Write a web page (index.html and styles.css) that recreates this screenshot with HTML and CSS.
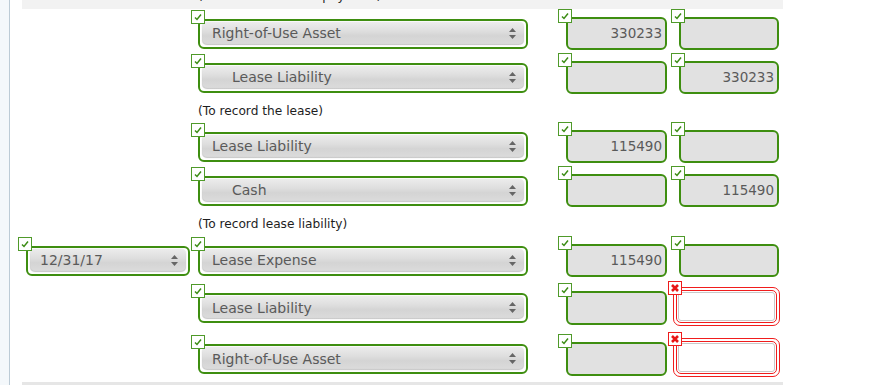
FILE: index.html
```html
<!DOCTYPE html>
<html lang="en">
<head>
  <meta charset="UTF-8">
  <title>Journal entries</title>
  <link rel="stylesheet" href="styles.css">
</head>
<body>

  <div class="page">
    <div class="rail"></div>

    <div class="sheet">
      <div class="band-top">
        <p class="note note--cut">(To record the lease payment)</p>
      </div>

      <div class="entries">

        <!-- lease -->
        <div class="row">
          <div></div>
          <div class="field field--acct">
            <span class="badge"><svg viewBox="0 0 12 12"><path d="M3 6.5 L5 8.5 L9 3.5"/></svg></span>
            <div class="pick pick--acct"><div class="pick-inner"><span>Right-of-Use Asset</span><svg class="arrows" viewBox="0 0 7 11"><path d="M3.5 0 L7 4 L0 4 Z M0 7 L7 7 L3.5 11 Z"/></svg></div></div>
          </div>
          <div class="field">
            <span class="badge"><svg viewBox="0 0 12 12"><path d="M3 6.5 L5 8.5 L9 3.5"/></svg></span>
            <div class="amt">330233</div>
          </div>
          <div class="field">
            <span class="badge"><svg viewBox="0 0 12 12"><path d="M3 6.5 L5 8.5 L9 3.5"/></svg></span>
            <div class="amt amt--cr"></div>
          </div>
        </div>

        <div class="row">
          <div></div>
          <div class="field field--acct">
            <span class="badge"><svg viewBox="0 0 12 12"><path d="M3 6.5 L5 8.5 L9 3.5"/></svg></span>
            <div class="pick pick--acct"><div class="pick-inner indent"><span>Lease Liability</span><svg class="arrows" viewBox="0 0 7 11"><path d="M3.5 0 L7 4 L0 4 Z M0 7 L7 7 L3.5 11 Z"/></svg></div></div>
          </div>
          <div class="field">
            <span class="badge"><svg viewBox="0 0 12 12"><path d="M3 6.5 L5 8.5 L9 3.5"/></svg></span>
            <div class="amt"></div>
          </div>
          <div class="field">
            <span class="badge"><svg viewBox="0 0 12 12"><path d="M3 6.5 L5 8.5 L9 3.5"/></svg></span>
            <div class="amt amt--cr">330233</div>
          </div>
        </div>

        <div class="row row--note">
          <div></div>
          <p class="note">(To record the lease)</p>
        </div>

        <!-- liability -->
        <div class="row">
          <div></div>
          <div class="field field--acct">
            <span class="badge"><svg viewBox="0 0 12 12"><path d="M3 6.5 L5 8.5 L9 3.5"/></svg></span>
            <div class="pick pick--acct"><div class="pick-inner"><span>Lease Liability</span><svg class="arrows" viewBox="0 0 7 11"><path d="M3.5 0 L7 4 L0 4 Z M0 7 L7 7 L3.5 11 Z"/></svg></div></div>
          </div>
          <div class="field">
            <span class="badge"><svg viewBox="0 0 12 12"><path d="M3 6.5 L5 8.5 L9 3.5"/></svg></span>
            <div class="amt">115490</div>
          </div>
          <div class="field">
            <span class="badge"><svg viewBox="0 0 12 12"><path d="M3 6.5 L5 8.5 L9 3.5"/></svg></span>
            <div class="amt amt--cr"></div>
          </div>
        </div>

        <div class="row">
          <div></div>
          <div class="field field--acct">
            <span class="badge"><svg viewBox="0 0 12 12"><path d="M3 6.5 L5 8.5 L9 3.5"/></svg></span>
            <div class="pick pick--acct"><div class="pick-inner indent"><span>Cash</span><svg class="arrows" viewBox="0 0 7 11"><path d="M3.5 0 L7 4 L0 4 Z M0 7 L7 7 L3.5 11 Z"/></svg></div></div>
          </div>
          <div class="field">
            <span class="badge"><svg viewBox="0 0 12 12"><path d="M3 6.5 L5 8.5 L9 3.5"/></svg></span>
            <div class="amt"></div>
          </div>
          <div class="field">
            <span class="badge"><svg viewBox="0 0 12 12"><path d="M3 6.5 L5 8.5 L9 3.5"/></svg></span>
            <div class="amt amt--cr">115490</div>
          </div>
        </div>

        <div class="row row--note row--note2">
          <div></div>
          <p class="note">(To record lease liability)</p>
        </div>

        <!-- 12/31/17 -->
        <div class="row">
          <div class="field field--date">
            <span class="badge"><svg viewBox="0 0 12 12"><path d="M3 6.5 L5 8.5 L9 3.5"/></svg></span>
            <div class="pick pick--date"><div class="pick-inner"><span>12/31/17</span><svg class="arrows" viewBox="0 0 7 11"><path d="M3.5 0 L7 4 L0 4 Z M0 7 L7 7 L3.5 11 Z"/></svg></div></div>
          </div>
          <div class="field field--acct">
            <span class="badge"><svg viewBox="0 0 12 12"><path d="M3 6.5 L5 8.5 L9 3.5"/></svg></span>
            <div class="pick pick--acct"><div class="pick-inner"><span>Lease Expense</span><svg class="arrows" viewBox="0 0 7 11"><path d="M3.5 0 L7 4 L0 4 Z M0 7 L7 7 L3.5 11 Z"/></svg></div></div>
          </div>
          <div class="field">
            <span class="badge"><svg viewBox="0 0 12 12"><path d="M3 6.5 L5 8.5 L9 3.5"/></svg></span>
            <div class="amt">115490</div>
          </div>
          <div class="field">
            <span class="badge"><svg viewBox="0 0 12 12"><path d="M3 6.5 L5 8.5 L9 3.5"/></svg></span>
            <div class="amt amt--cr"></div>
          </div>
        </div>

        <div class="row row--err">
          <div></div>
          <div class="field field--acct">
            <span class="badge"><svg viewBox="0 0 12 12"><path d="M3 6.5 L5 8.5 L9 3.5"/></svg></span>
            <div class="pick pick--acct"><div class="pick-inner"><span>Lease Liability</span><svg class="arrows" viewBox="0 0 7 11"><path d="M3.5 0 L7 4 L0 4 Z M0 7 L7 7 L3.5 11 Z"/></svg></div></div>
          </div>
          <div class="field">
            <span class="badge"><svg viewBox="0 0 12 12"><path d="M3 6.5 L5 8.5 L9 3.5"/></svg></span>
            <div class="amt amt--tall"></div>
          </div>
          <div class="field field--err">
            <span class="badge badge--x"><svg viewBox="0 0 12 12"><path d="M3 3 L9 9 M9 3 L3 9"/></svg></span>
            <div class="wrong"><div class="wrong-ring"><div class="wrong-input"></div></div></div>
          </div>
        </div>

        <div class="row row--err">
          <div></div>
          <div class="field field--acct">
            <span class="badge"><svg viewBox="0 0 12 12"><path d="M3 6.5 L5 8.5 L9 3.5"/></svg></span>
            <div class="pick pick--acct"><div class="pick-inner"><span>Right-of-Use Asset</span><svg class="arrows" viewBox="0 0 7 11"><path d="M3.5 0 L7 4 L0 4 Z M0 7 L7 7 L3.5 11 Z"/></svg></div></div>
          </div>
          <div class="field">
            <span class="badge"><svg viewBox="0 0 12 12"><path d="M3 6.5 L5 8.5 L9 3.5"/></svg></span>
            <div class="amt amt--tall"></div>
          </div>
          <div class="field field--err">
            <span class="badge badge--x"><svg viewBox="0 0 12 12"><path d="M3 3 L9 9 M9 3 L3 9"/></svg></span>
            <div class="wrong"><div class="wrong-ring"><div class="wrong-input"></div></div></div>
          </div>
        </div>

      </div>

      <div class="band-bottom"></div>
    </div>
  </div>

</body>
</html>
```

FILE: styles.css
```css
* {
  box-sizing: border-box;
}

body {
  margin: 0;
  background: #fff;
  font-family: "DejaVu Sans", Verdana, sans-serif;
  color: #555;
}

.page {
  display: flex;
  height: 385px;
  overflow: hidden;
}

.rail {
  width: 10px;
  flex: none;
  background: #f4f8fb;
  border-right: 1px solid #bccbd6;
}

.sheet {
  flex: 1;
}

.band-top {
  margin-left: 12px;
  width: 761px;
  height: 9px;
  background: #f2f2f2;
  overflow: hidden;
}

.band-bottom {
  margin: 2px 0 0 12px;
  width: 761px;
  height: 4px;
  background: #e6e6e6;
}

.entries {
  margin-top: -2px;
}

.row {
  display: grid;
  grid-template-columns: 173px 367px 113px 115px;
  align-items: center;
  height: 44px;
  padding-left: 8px;
}

.row--note {
  height: 25px;
  align-items: start;
}

.row--note2 {
  height: 26px;
}

.row--err {
  height: 51px;
}

.note {
  margin: 0;
  padding: 8px 0 0 7px;
  font-size: 12.2px;
  line-height: 16px;
  color: #1e1e1e;
}

.note--cut {
  margin: -12px 0 0 176px;
  padding: 0;
}

/* badge + control */
.field {
  position: relative;
  padding: 8px 0 0 8px;
}

.field--acct {
  padding: 9px 0 0 7px;
}

.field--date {
  padding: 9px 0 0 8px;
}

.field--err {
  margin-left: -3px;
  padding: 6px 0 0 5px;
}

.badge {
  position: absolute;
  top: 0;
  left: 0;
  width: 14px;
  height: 14px;
  background: #fff;
  border: 1px solid #4f9a2a;
  display: flex;
}

.badge svg {
  width: 12px;
  height: 12px;
  fill: none;
  stroke: #3b8c14;
  stroke-width: 1.5;
}

.badge--x {
  border-color: #ee1c1c;
}

.badge--x svg {
  stroke: #e81515;
  stroke-width: 2.6;
}

/* dropdowns */
.pick {
  height: 30px;
  border: 2px solid #3e8e10;
  border-radius: 6px;
  padding: 1px 2px 2px;
  background: #fff;
}

.pick--acct {
  width: 330px;
}

.pick--date {
  width: 164px;
}

.pick-inner {
  height: 23px;
  display: flex;
  align-items: center;
  justify-content: space-between;
  padding: 0 8px 0 10px;
  border-radius: 5px;
  background: linear-gradient(to bottom, #ececec 0%, #dedede 40%, #d4d4d4 60%, #dcdcdc 100%);
  box-shadow: inset 0 -1px 1px rgba(0,0,0,0.08), 0 0 1px rgba(0,0,0,0.25);
  font-size: 14px;
  color: #5a5a5a;
}

.pick-inner.indent span {
  padding-left: 20px;
}

.arrows {
  width: 7px;
  height: 11px;
  fill: #666;
}

/* amount boxes */
.amt {
  width: 101px;
  height: 33px;
  border: 2px solid #3e8e10;
  border-radius: 6px;
  background: #e1e1e1;
  text-align: right;
  padding-right: 3px;
  font-size: 13.5px;
  line-height: 29px;
  color: #5a5a5a;
}

.amt--cr {
  width: 100px;
}

.amt--tall {
  height: 34px;
}

.wrong {
  width: 107px;
  height: 39px;
  border: 1px solid #f01d1d;
  border-radius: 7px;
  padding: 2px;
  background: #fff;
}

.wrong-ring {
  height: 100%;
  border: 1px solid #f01d1d;
  border-radius: 5px;
  padding: 1px;
}

.wrong-input {
  height: 100%;
  border: 1px solid #c9c9c9;
  border-radius: 3px;
  background: #fff;
}
```
